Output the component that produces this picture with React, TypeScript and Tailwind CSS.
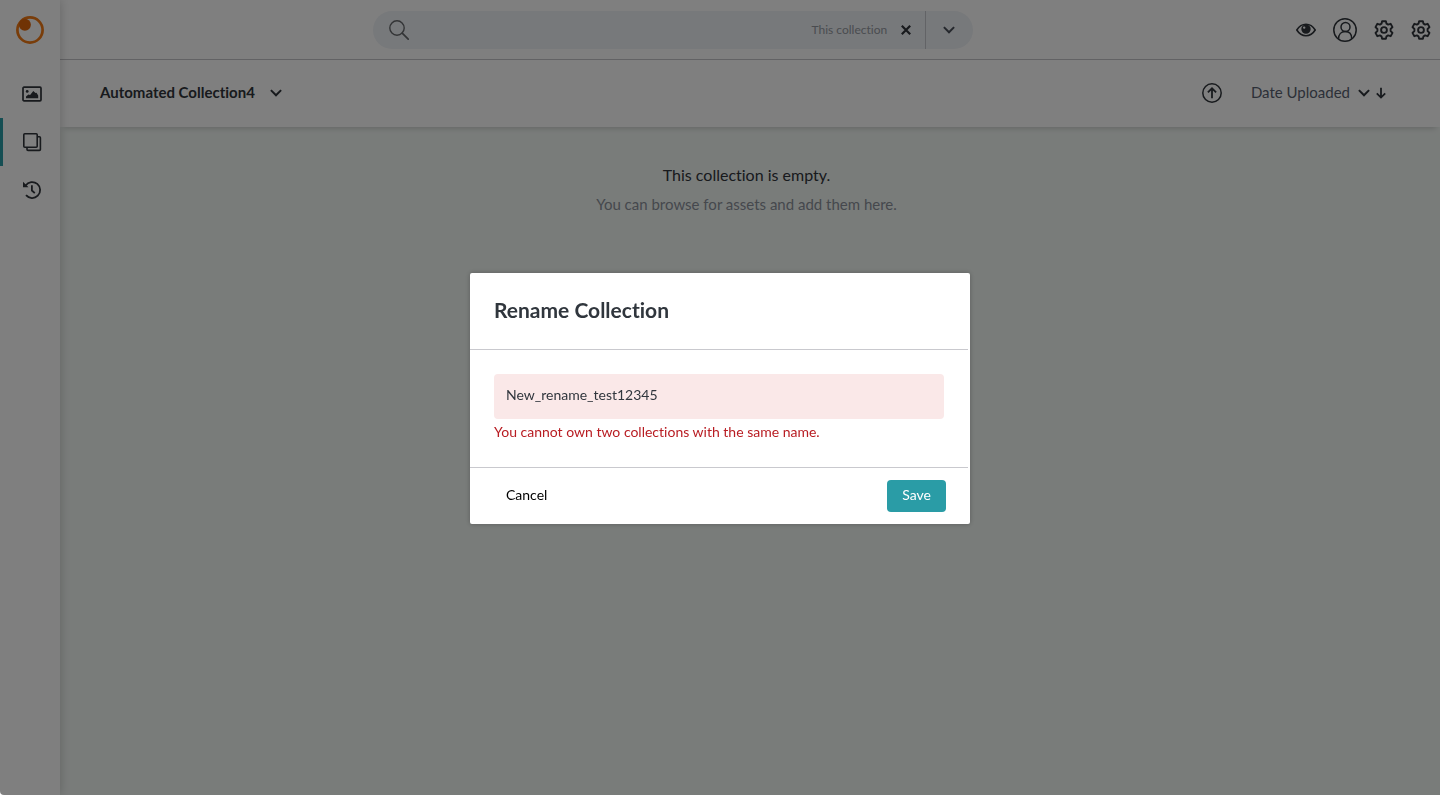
import React, { useState } from "react";

type IconProps = { className?: string };

const Logo = () => (
  <svg viewBox="0 0 28 28" className="size-7" aria-hidden="true">
    <circle cx="14" cy="14" r="12.6" fill="none" stroke="#f27a14" strokeWidth="2.7" />
    <circle cx="8.9" cy="8.8" r="6" fill="#e0660a" />
  </svg>
);

const ImageIcon = () => (
  <svg viewBox="0 0 20 16" className="h-4 w-5" aria-hidden="true">
    <rect x="1" y="1.2" width="18" height="13.6" rx="1" fill="none" stroke="currentColor" strokeWidth="1.7" />
    <circle cx="5.2" cy="5.4" r="1.4" fill="currentColor" />
    <path d="M4 12.200V10.400L6.400 8.500l1.700.6L11.300 4.900l2.200 2.200 1-.3L16.200 9.600v2.600z" fill="currentColor" />
  </svg>
);

const CollectionsIcon = () => (
  <svg viewBox="0 0 20 20" className="size-5" fill="none" stroke="currentColor" strokeWidth="1.6" aria-hidden="true">
    <rect x="1.8" y="1.8" width="13.4" height="13.4" rx="1" />
    <path d="M15.2 4.8h2.2a1 1 0 0 1 1 1V17.400a1 1 0 0 1-1 1H6a1 1 0 0 1-1-1v-2.200" />
  </svg>
);

const HistoryIcon = () => (
  <svg viewBox="0 0 20 20" className="size-5" fill="none" stroke="currentColor" strokeWidth="1.8" aria-hidden="true">
    <path d="M3.600 5.400A8 8 0 1 1 4 15.200" />
    <path d="M1 1.800v5.400h5.500z" fill="currentColor" stroke="none" />
    <path d="M9.900 5.300v5.200l2.900 2.700" />
  </svg>
);

const SearchIcon = () => (
  <svg viewBox="0 0 20 20" className="size-5" fill="none" stroke="currentColor" strokeWidth="1.4" strokeLinecap="round" aria-hidden="true">
    <circle cx="8" cy="8" r="7.200" />
    <path d="M13.200 13.200l6 6" strokeWidth="1.700" />
  </svg>
);

const CloseIcon = () => (
  <svg viewBox="0 0 10 10" className="size-2.5" fill="none" stroke="currentColor" strokeWidth="2.200" aria-hidden="true">
    <path d="M.8.8l8.400 8.400M9.200.8L.8 9.200" />
  </svg>
);

const Chevron = ({ className }: IconProps) => (
  <svg viewBox="0 0 12 8" className={className} fill="none" stroke="currentColor" strokeWidth="2" aria-hidden="true">
    <path d="M.9 1.100L6 6.300l5.100-5.200" />
  </svg>
);

const EyeIcon = () => (
  <svg viewBox="0 0 20 14" className="h-3.5 w-5" aria-hidden="true">
    <path d="M.8 7C3.200 3.100 6.400 1.300 10 1.300S16.800 3.100 19.200 7C16.800 10.900 13.600 12.700 10 12.700S3.200 10.900.8 7z" fill="none" stroke="currentColor" strokeWidth="1.600" />
    <path fillRule="evenodd" d="M10 1.400a4.700 4.700 0 1 1 0 9.400 4.700 4.700 0 0 1 0-9.400zM8.200 3.400a1.200 1.200 0 1 0 0 2.400 1.200 1.200 0 0 0 0-2.400z" fill="currentColor" />
  </svg>
);

const UserIcon = () => (
  <svg viewBox="0 0 24 24" className="size-6" fill="none" stroke="currentColor" strokeWidth="1.500" aria-hidden="true">
    <circle cx="12" cy="12" r="11.200" />
    <circle cx="12.500" cy="9" r="4.500" />
    <path d="M5.600 20.700c0-4.500 2.700-7.200 6.600-7.200s6.500 2.700 6.500 7.200" />
  </svg>
);

const GearIcon = () => (
  <svg viewBox="0 0 20 20" className="size-5" fill="none" stroke="currentColor" strokeWidth="1.900" strokeLinejoin="round" aria-hidden="true">
    <path d="M8.100 1.200h3.800l.6 2.500 1.600.9 2.500-.8 1.900 3.300-1.900 1.900v2l1.900 1.900-1.900 3.300-2.500-.8-1.600.9-.6 2.500H8.100l-.6-2.500-1.600-.9-2.500.8-1.900-3.300L3.400 11V9L1.500 7.100l1.900-3.300 2.500.8 1.600-.9z" />
    <circle cx="10" cy="10" r="2.900" />
  </svg>
);

const UploadIcon = () => (
  <svg viewBox="0 0 20 20" className="size-5" fill="none" stroke="currentColor" strokeWidth="1.500" aria-hidden="true">
    <circle cx="10" cy="10" r="9.200" />
    <path d="M10 15.200V5.600M5.900 9.400L10 5.300l4.100 4.100" strokeWidth="1.800" />
  </svg>
);

const ArrowDown = () => (
  <svg viewBox="0 0 10 12" className="h-3 w-2.5" fill="none" stroke="currentColor" strokeWidth="1.800" aria-hidden="true">
    <path d="M5 .8v9.600M.8 6.400L5 10.600l4.200-4.200" />
  </svg>
);

const navItems = [
  { label: "Assets", icon: <ImageIcon />, active: false },
  { label: "Collections", icon: <CollectionsIcon />, active: true },
  { label: "History", icon: <HistoryIcon />, active: false },
];

function Sidebar() {
  return (
    <nav className="z-20 flex w-15 shrink-0 flex-col bg-white shadow-[0_0_10px_rgba(0,0,0,0.2)]">
      <a href="#home" aria-label="Home" className="flex h-[70px] items-center justify-center pb-2.5">
        <Logo />
      </a>
      {navItems.map((item) => (
        <a
          key={item.label}
          href={"#" + item.label.toLowerCase()}
          aria-label={item.label}
          className={
            item.active
              ? "flex h-12 items-center justify-center border-l-3 border-[#2a9ca6]"
              : "flex h-12 items-center justify-center border-l-3 border-transparent"
          }
        >
          {item.icon}
        </a>
      ))}
    </nav>
  );
}

function TopBar() {
  return (
    <header className="flex h-15 items-center justify-between border-b border-[#c4c4c8] bg-white">
      <div className="flex-[2] pl-2" />
      <div className="flex h-[38px] w-[600px] items-center overflow-hidden rounded-full bg-[#eff2f6]">
        <label htmlFor="search" className="pl-4 text-[#66696c]">
          <SearchIcon />
        </label>
        <input id="search" type="text" aria-label="Search" className="h-full min-w-0 flex-1 bg-transparent px-3 outline-none" />
        <span className="text-xs text-[#9499a1]">This collection</span>
        <button aria-label="Clear scope" className="flex h-full w-[38px] items-center justify-center">
          <CloseIcon />
        </button>
        <button aria-label="Search options" className="flex h-full w-12 items-center justify-center border-l border-[#c4c7cd] pr-0.5 text-[#4b515b]">
          <Chevron className="h-2 w-3" />
        </button>
      </div>
      <div className="flex flex-[3] items-center justify-end gap-[17px] pr-[9px]">
        <button aria-label="Preview"><EyeIcon /></button>
        <button aria-label="Account"><UserIcon /></button>
        <button aria-label="Settings"><GearIcon /></button>
        <button aria-label="Admin settings"><GearIcon /></button>
      </div>
    </header>
  );
}

function CollectionBar() {
  return (
    <div className="flex h-[67px] items-center justify-between bg-white pr-[54px] pb-0.5 pl-10 shadow-[0_5px_6px_-4px_rgba(0,0,0,0.2)]">
      <button className="flex items-center gap-[15px] text-[15px] font-bold">
        Automated Collection4
        <Chevron className="h-2 w-3" />
      </button>
      <div className="flex items-center gap-[29px]">
        <button aria-label="Upload"><UploadIcon /></button>
        <div className="flex items-center gap-1.5">
          <button className="flex items-center gap-2 text-[15px] text-[#596170]">
            Date Uploaded
            <span className="text-[#30353b]"><Chevron className="h-2 w-3" /></span>
          </button>
          <button aria-label="Sort descending"><ArrowDown /></button>
        </div>
      </div>
    </div>
  );
}

function RenameDialog() {
  const [name, setName] = useState("New_rename_test12345");
  return (
    <div className="fixed inset-0 z-30 flex items-center justify-center rounded-bl-sm bg-black/50 pt-0.5">
      <form
        role="dialog"
        aria-modal="true"
        aria-labelledby="dialog-title"
        onSubmit={(e) => e.preventDefault()}
        className="w-[500px] max-w-full rounded-xs bg-white pr-0.5 text-[#30363d] shadow-[0_0_5px_rgba(0,0,0,0.25)]"
      >
        <h2 id="dialog-title" className="border-b border-[#c9c9ce] px-6 pt-[23px] pb-[25px] text-[21px] leading-7 font-bold">
          Rename Collection
        </h2>
        <div className="px-6 pt-6 pb-6">
          <input
            type="text"
            aria-label="Collection name"
            aria-invalid="true"
            aria-describedby="name-error"
            value={name}
            onChange={(e) => setName(e.target.value)}
            className="block h-[45px] w-full rounded-sm bg-[#fae8e8] px-3 pb-1 text-sm outline-none"
          />
          <p id="name-error" className="pt-0.5 text-sm leading-[22px] text-[#b81c22]">
            You cannot own two collections with the same name.
          </p>
        </div>
        <div className="flex items-center justify-between border-t border-[#c9c9ce] py-3 pr-[22px] pl-6">
          <button type="button" className="h-8 px-3 pb-0.5 text-sm text-black">Cancel</button>
          <button type="submit" className="h-8 rounded-sm bg-[#2a9ca6] px-[15px] pb-0.5 text-sm text-white">Save</button>
        </div>
      </form>
    </div>
  );
}

export default function App() {
  return (
    <div className="flex min-h-screen bg-white font-['Lato',sans-serif] text-[#30353b] [font-variant-ligatures:none]">
      <Sidebar />
      <div className="flex min-w-0 flex-1 flex-col bg-[#f3f8f5]">
        <TopBar />
        <CollectionBar />
        <main className="flex flex-col items-center gap-[5px] pt-9 pr-[7px]">
          <h1 className="text-base leading-6">This collection is empty.</h1>
          <p className="text-[15px] leading-6 text-[#8b919b]">You can browse for assets and add them here.</p>
        </main>
      </div>
      <RenameDialog />
    </div>
  );
}
